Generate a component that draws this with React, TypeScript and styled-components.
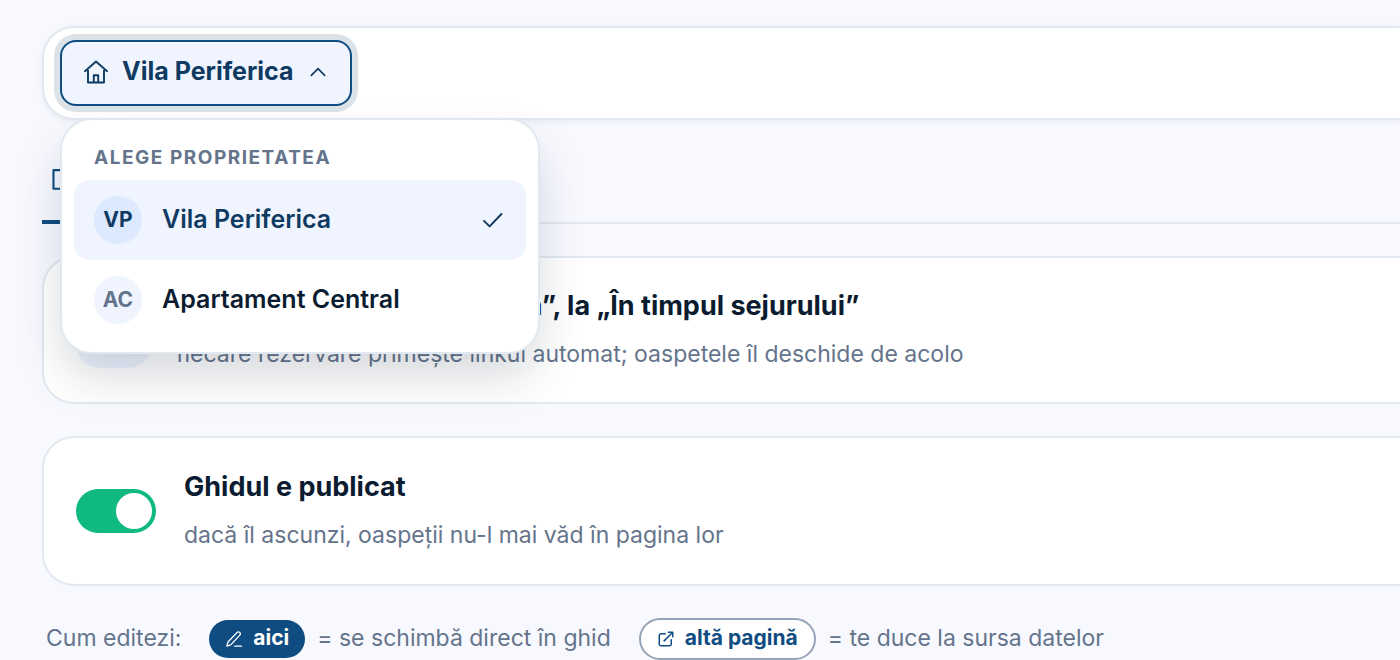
import React, { useState } from "react";
import styled, { createGlobalStyle } from "styled-components";

const GlobalStyle = createGlobalStyle`
  *, *::before, *::after { box-sizing: border-box; }
  body {
    margin: 0;
    background: #f8f9ff;
    color: #0b1c30;
    font-family: Inter, "Liberation Sans", sans-serif;
  }
  button, input { font: inherit; color: inherit; margin: 0; }
  h2, p { margin: 0; }
`;

const Page = styled.main`
  padding: 26px 0 0 42px;
  overflow: hidden;
`;

const Panel = styled.section`
  background: #fff;
  border: 2px solid #e2e8f0;
  border-right: 0;
  border-radius: 32px 0 0 32px;
`;

const Toolbar = styled(Panel)`
  padding: 12px 16px;
  box-shadow: 0 2px 6px rgba(11, 28, 48, 0.06);
`;

const Picker = styled.div`
  position: relative;
  width: max-content;
`;

const PickerButton = styled.button`
  display: flex;
  align-items: center;
  height: 66px;
  padding: 0 22px 2px;
  gap: 14px;
  border: 2px solid #0f4c81;
  border-radius: 16px;
  background: #eff4ff;
  box-shadow: 0 0 0 6px rgba(15, 60, 100, 0.15);
  color: #0f3a61;
  font-size: 25px;
  font-weight: 700;
  line-height: 36px;
  cursor: pointer;
`;

const Name = styled.span`
  padding-bottom: 2px;
`;

const Menu = styled.div`
  position: absolute;
  z-index: 2;
  top: 78px;
  left: 0;
  width: 480px;
  padding: 12px;
  border: 2px solid #e2e8f0;
  border-radius: 32px;
  background: #fff;
  box-shadow: 0 24px 48px -4px rgba(11, 28, 48, 0.18);
`;

const MenuLabel = styled.p`
  padding: 14px 20px 10px;
  color: #64748b;
  font-size: 19px;
  font-weight: 700;
  line-height: 24px;
  letter-spacing: 0.08em;
`;

const Option = styled.button<{ $selected?: boolean }>`
  display: flex;
  align-items: center;
  gap: 20px;
  width: 100%;
  height: 80px;
  padding: 0 20px;
  border: 0;
  border-radius: 16px;
  background: ${(p) => (p.$selected ? "#eff4ff" : "transparent")};
  color: ${(p) => (p.$selected ? "#0f3a61" : "#0b1c30")};
  font-size: 25px;
  font-weight: 600;
  line-height: 36px;
  text-align: left;
  cursor: pointer;
`;

const OptionName = styled(Name)`
  flex: 1;
`;

const Initials = styled.span<{ $selected?: boolean }>`
  display: grid;
  place-items: center;
  width: 48px;
  height: 48px;
  border-radius: 50%;
  background: ${(p) => (p.$selected ? "#dce9ff" : "#eff4ff")};
  color: ${(p) => (p.$selected ? "#0f3a61" : "#64748b")};
  font-size: 21px;
  font-weight: 700;
`;

const Tabs = styled.nav`
  display: flex;
  height: 104px;
  align-items: flex-end;
  border-bottom: 2px solid #e2e8f0;
`;

const Tab = styled.a`
  display: flex;
  align-items: center;
  gap: 12px;
  height: 84px;
  margin-bottom: -2px;
  padding: 0 8px;
  border-bottom: 4px solid #0f4c81;
  color: #0f4c81;
  font-size: 25px;
  font-weight: 600;
  text-decoration: none;
`;

const Card = styled(Panel)<{ $gap: number; $height: number }>`
  display: flex;
  align-items: center;
  gap: ${(p) => p.$gap}px;
  min-height: ${(p) => p.$height}px;
  margin-top: 32px;
  padding: 32px;
`;

const IconTile = styled.span`
  display: grid;
  place-items: center;
  width: 76px;
  height: 76px;
  border-radius: 24px;
  background: #eff4ff;
  color: #0f4c81;
`;

const CardText = styled.div`
  display: flex;
  flex-direction: column;
  gap: 16px;
`;

const CardTitle = styled.h2`
  font-size: 27px;
  font-weight: 700;
  line-height: 32px;
  white-space: nowrap;
`;

const CardNote = styled.p`
  color: #64748b;
  font-size: 23px;
  line-height: 32px;
  white-space: nowrap;
`;

const Switch = styled.input`
  appearance: none;
  width: 80px;
  height: 44px;
  padding: 4px;
  border-radius: 22px;
  background: #cbd5e1;
  cursor: pointer;

  &::before {
    content: "";
    display: block;
    width: 36px;
    height: 36px;
    border-radius: 50%;
    background: #fff;
  }
  &:checked { background: #10b981; }
  &:checked::before { margin-left: auto; }
`;

const Legend = styled.footer`
  display: flex;
  align-items: center;
  gap: 28px;
  margin-top: 32px;
  padding-left: 4px;
  color: #64748b;
  font-size: 23px;
  line-height: 36px;
  white-space: nowrap;
`;

const LegendItem = styled.span`
  display: flex;
  align-items: center;
  gap: 12px;
`;

const Chip = styled.span<{ $outlined?: boolean }>`
  display: flex;
  align-items: center;
  gap: 10px;
  height: ${(p) => (p.$outlined ? 42 : 38)}px;
  padding: 0 16px;
  border: ${(p) => (p.$outlined ? "2px solid #94a3b8" : "0")};
  border-radius: 21px;
  background: ${(p) => (p.$outlined ? "#fff" : "#0f4c81")};
  color: ${(p) => (p.$outlined ? "#0f4c81" : "#fff")};
  font-size: 21px;
  font-weight: 700;
`;

function Icon({ size, width = 1.5, children }: { size: number; width?: number; children: React.ReactNode }) {
  return (
    <svg width={size} height={size} viewBox="0 0 24 24" fill="none" stroke="currentColor"
      strokeWidth={width} strokeLinecap="round" strokeLinejoin="round" aria-hidden="true">
      {children}
    </svg>
  );
}

const PROPERTIES = [
  { initials: "VP", name: "Vila Periferica" },
  { initials: "AC", name: "Apartament Central" },
];

export default function App() {
  const [open, setOpen] = useState(true);
  const [selected, setSelected] = useState(0);
  const [published, setPublished] = useState(true);

  return (
    <>
      <GlobalStyle />
      <Page>
        <Toolbar>
          <Picker>
            <PickerButton type="button" aria-expanded={open} onClick={() => setOpen(!open)}>
              <Icon size={24} width={1.9}>
                <path d="M1 11.200 12 1.500l11 9.700M4 8.800v13.700h16V8.800M9.800 22.500v-7.200h4.400v7.200" />
              </Icon>
              <Name>{PROPERTIES[selected].name}</Name>
              <Icon size={20} width={2}>
                <path d="m4 16 8-8 8 8" />
              </Icon>
            </PickerButton>
            {open && (
              <Menu>
                <MenuLabel>ALEGE PROPRIETATEA</MenuLabel>
                {PROPERTIES.map((property, i) => (
                  <Option key={property.name} type="button" $selected={i === selected} onClick={() => setSelected(i)}>
                    <Initials $selected={i === selected}>{property.initials}</Initials>
                    <OptionName>{property.name}</OptionName>
                    {i === selected && (
                      <Icon size={24} width={1.9}>
                        <path d="m2 12.800 5.600 5.600L19.500 6" />
                      </Icon>
                    )}
                  </Option>
                ))}
              </Menu>
            )}
          </Picker>
        </Toolbar>

        <Tabs>
          <Tab href="#ghid">
            <Icon size={28} width={1.8}>
              <path d="M3 3.500h7l2 2 2-2h7v16h-7l-2 2-2-2H3z" />
            </Icon>
            Ghid
          </Tab>
        </Tabs>

        <Card $gap={24} $height={148}>
          <IconTile>
            <Icon size={36}>
              <circle cx="12" cy="12" r="9" />
              <path d="M12 11v5M12 8h.01" />
            </Icon>
          </IconTile>
          <CardText>
            <CardTitle>Apare în „Rezervarea activă”, la „În timpul sejurului”</CardTitle>
            <CardNote>fiecare rezervare primește linkul automat; oaspetele îl deschide de acolo</CardNote>
          </CardText>
        </Card>

        <Card $gap={28} $height={150}>
          <Switch type="checkbox" id="published" checked={published} onChange={() => setPublished(!published)} />
          <CardText>
            <CardTitle as="label" htmlFor="published">Ghidul e publicat</CardTitle>
            <CardNote>dacă îl ascunzi, oaspeții nu-l mai văd în pagina lor</CardNote>
          </CardText>
        </Card>

        <Legend>
          <Name>Cum editezi:</Name>
          <LegendItem>
            <Chip>
              <Icon size={18} width={1.8}>
                <path d="M2.500 21.500 4 16 16.200 3.200a2.300 2.300 0 0 1 3.300 0l.3.3a2.300 2.300 0 0 1 0 3.300L7.600 19.800zM13 21.500h9" />
              </Icon>
              <Name>aici</Name>
            </Chip>
            <Name>= se schimbă direct în ghid</Name>
          </LegendItem>
          <LegendItem>
            <Chip $outlined>
              <Icon size={18} width={2}>
                <path d="M11 5H5.500A2.500 2.500 0 0 0 3 7.500v11A2.500 2.500 0 0 0 5.500 21h11a2.500 2.500 0 0 0 2.500-2.500V13M15 3h6v6M21 3 9.500 14.500" />
              </Icon>
              <Name>altă pagină</Name>
            </Chip>
            <Name>= te duce la sursa datelor</Name>
          </LegendItem>
        </Legend>
      </Page>
    </>
  );
}
